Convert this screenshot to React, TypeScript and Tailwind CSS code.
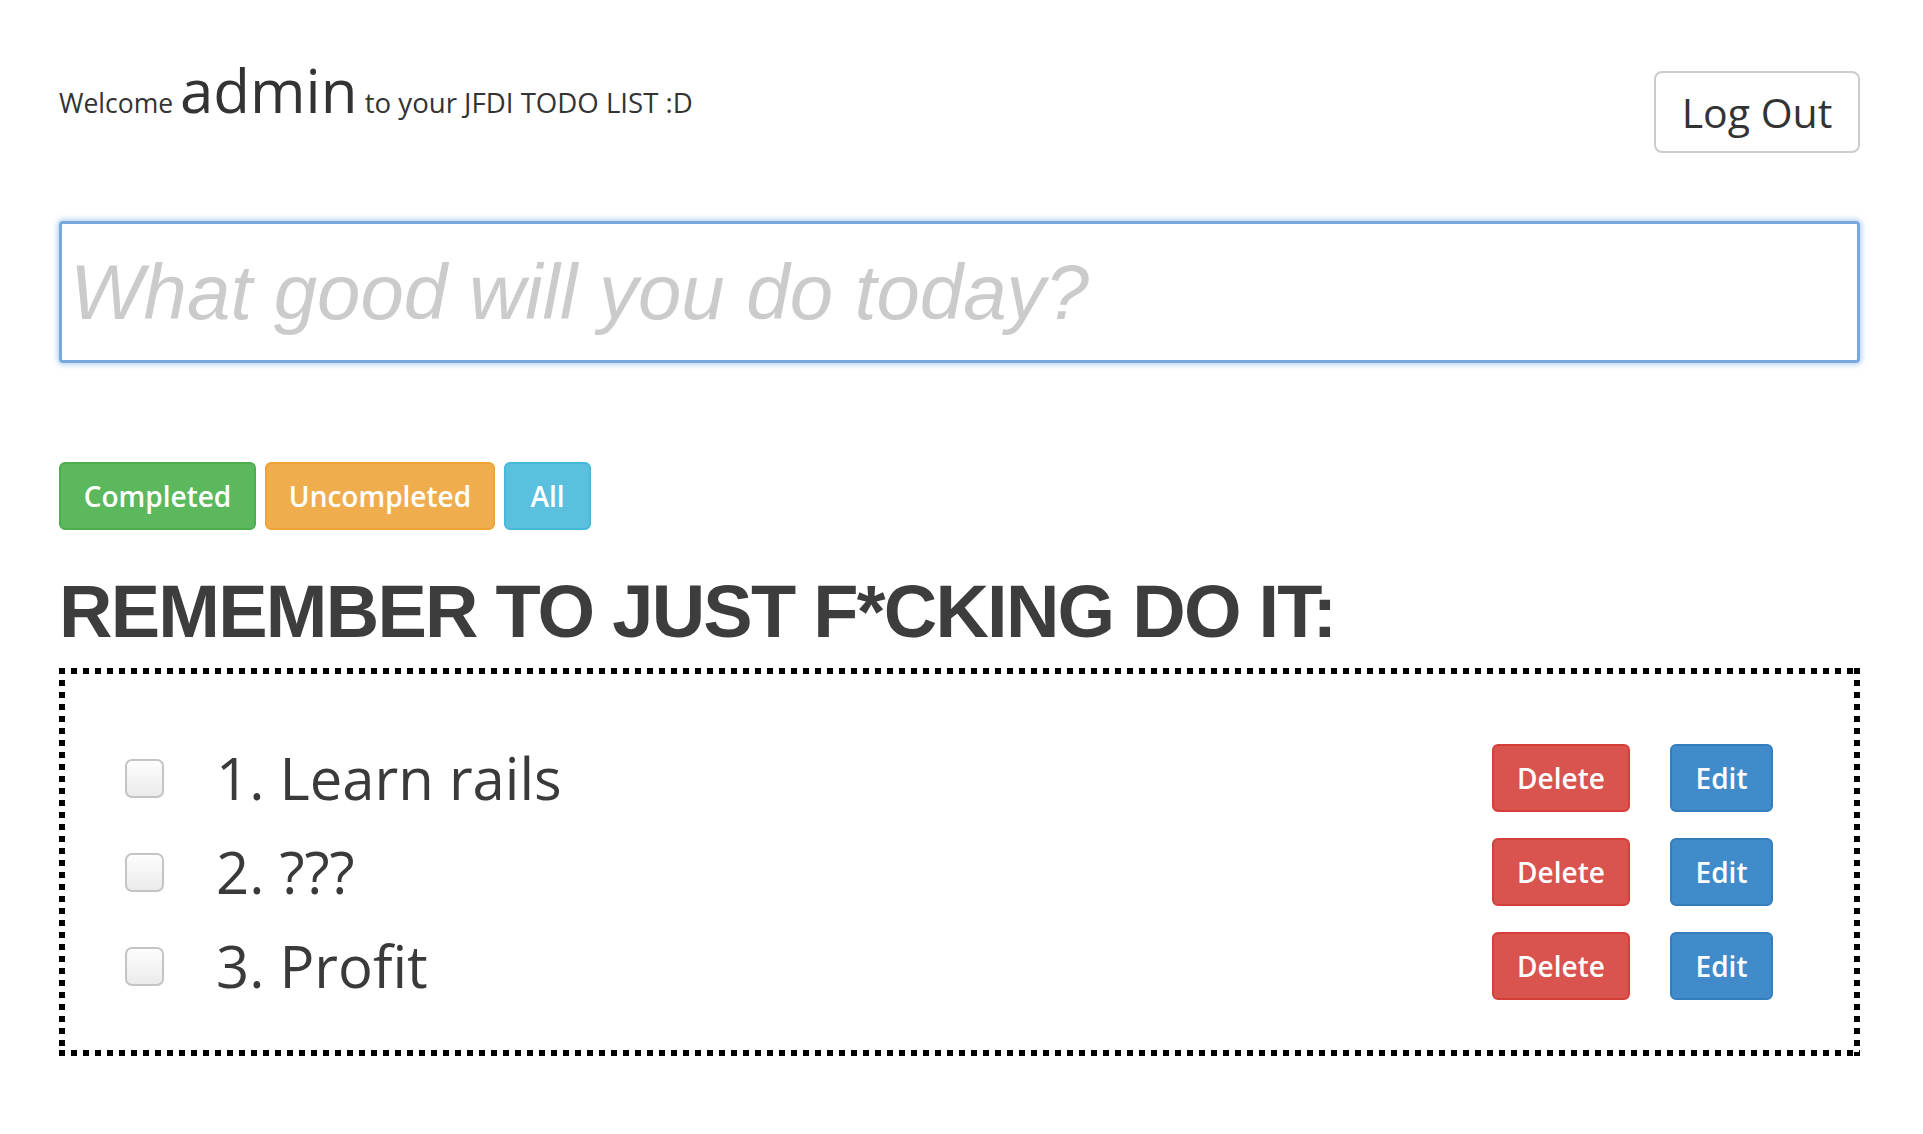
import React from "react";

const sans = { fontFamily: '"Open Sans", "Noto Sans", sans-serif' };

function Checkbox() {
  return (
    <div className="w-[39px] h-[39px] shrink-0 rounded-[7px] border-2 border-[#c4c4c4] bg-gradient-to-b from-[#fdfdfd] to-[#ebebeb]" />
  );
}

function Row({ text }: { text: string }) {
  return (
    <div className="flex items-center h-[68px]">
      <Checkbox />
      <div className="ml-[52px] text-[58px] leading-none text-[#3a3a3a] flex-1 whitespace-nowrap">{text}</div>
      <button className="w-[138px] h-[68px] rounded-[6px] border-2 border-[#d43f3a] bg-[#d9534f] text-white text-[28px] font-semibold leading-none">
        Delete
      </button>
      <button className="ml-[40px] w-[103px] h-[68px] rounded-[6px] border-2 border-[#357ebd] bg-[#428bca] text-white text-[28px] font-semibold leading-none">
        Edit
      </button>
    </div>
  );
}

export default function App() {
  return (
    <div className="min-h-[1134px] bg-white pl-[59px] pr-[63px] pt-[60px]" style={sans}>
      <div className="flex items-start justify-between">
        <div className="h-[60px] leading-none whitespace-nowrap text-[#333]">
          <span className="text-[26.5px]">Welcome </span>
          <span className="text-[60px]">admin</span>
          <span className="text-[27.6px]"> to your JFDI TODO LIST :D</span>
        </div>
        <button className="mt-[11px] w-[206px] h-[82px] rounded-[8px] border-2 border-[#cccccc] bg-white text-[41px] leading-none text-[#333]">
          Log Out
        </button>
      </div>

      <input
        className="mt-[68px] block w-full h-[142px] rounded-[4px] border-[3px] border-[#79a8dc] shadow-[0_0_5px_2px_rgba(140,185,235,0.6)] pl-[8px] outline-none text-[78px] placeholder:text-[#cbcbcb] placeholder:italic"
        style={{ fontFamily: '"Liberation Sans", Arial, sans-serif' }}
        placeholder="What good will you do today?"
      />

      <div className="mt-[99px] flex gap-[9px]">
        <button className="w-[197px] h-[68px] rounded-[6px] border-2 border-[#4cae4c] bg-[#5cb85c] text-white text-[28px] font-semibold leading-none">
          Completed
        </button>
        <button className="w-[230px] h-[68px] rounded-[6px] border-2 border-[#eea236] bg-[#f0ad4e] text-white text-[28px] font-semibold leading-none">
          Uncompleted
        </button>
        <button className="w-[87px] h-[68px] rounded-[6px] border-2 border-[#46b8da] bg-[#5bc0de] text-white text-[28px] font-semibold leading-none">
          All
        </button>
      </div>

      <h1
        className="mt-[45px] text-[74px] leading-none font-bold tracking-[-1.75px] text-[#3d3d3d] whitespace-nowrap"
        style={{ fontFamily: '"Liberation Sans", Arial, sans-serif' }}
      >
        REMEMBER TO JUST F*CKING DO IT:
      </h1>

      <div className="mt-[19px] pt-[76px] pb-[56px] pl-[66px] pr-[87px] flex flex-col gap-[26px] [background-image:linear-gradient(to_right,#000_50%,transparent_50%),linear-gradient(to_right,#000_50%,transparent_50%),linear-gradient(to_bottom,#000_50%,transparent_50%),linear-gradient(to_bottom,#000_50%,transparent_50%)] [background-size:12px_6px,12px_6px,6px_12px,6px_12px] [background-position:left_top,left_bottom,left_top,right_top] [background-repeat:repeat-x,repeat-x,repeat-y,repeat-y]">
        <Row text="1. Learn rails" />
        <Row text="2. ???" />
        <Row text="3. Profit" />
      </div>
    </div>
  );
}
